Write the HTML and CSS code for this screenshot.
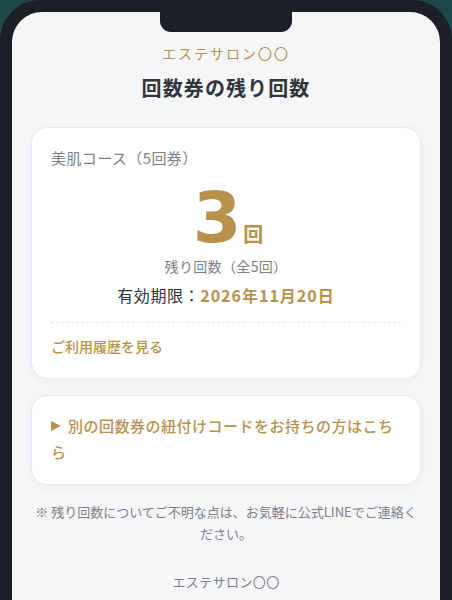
FILE: index.html
```html
<!DOCTYPE html>
<html lang="ja">
<head>
<meta charset="utf-8">
<title>回数券の残り回数</title>
<link rel="stylesheet" href="styles.css">
</head>
<body>
<div class="phone">
  <div class="screen">
    <div class="notch"></div>
    <div class="content">
      <div class="brand">エステサロン〇〇</div>
      <h1 class="title">回数券の残り回数</h1>

      <section class="card ticket">
        <div class="course">美肌コース（5回券）</div>
        <div class="count">
          <span class="count-num">3</span><span class="count-unit">回</span>
        </div>
        <div class="remain">残り回数（全5回）</div>
        <div class="expiry">有効期限：<span class="expiry-date">2026年11月20日</span></div>
        <div class="history"><a class="history-link">ご利用履歴を見る</a></div>
      </section>

      <section class="card link-card">
        <p class="link-text"><span class="tri"></span>別の回数券の紐付けコードをお持ちの方はこちら</p>
      </section>

      <p class="note">※ 残り回数についてご不明な点は、お気軽に公式LINEでご連絡ください。</p>

      <div class="footer">エステサロン〇〇</div>
    </div>
  </div>
</div>
</body>
</html>
```

FILE: styles.css
```css
* { box-sizing: border-box; }

html, body {
  margin: 0;
  padding: 0;
}

body {
  width: 452px;
  height: 600px;
  overflow: hidden;
  background: linear-gradient(90deg, #1d4a48 0%, #2a2550 30%, #1b1f26 50%, #2a2550 70%, #1d4a48 100%);
  font-family: "Noto Sans CJK JP", "Noto Sans", sans-serif;
}

.phone {
  width: 452px;
  height: 600px;
  background: #1b1f26;
  border-radius: 40px 40px 0 0;
  padding: 12px 12px 0 12px;
}

.screen {
  position: relative;
  height: 100%;
  background: #f5f6f8;
  border-radius: 30px 30px 0 0;
  overflow: hidden;
}

.notch {
  position: absolute;
  top: 0;
  left: 148px;
  width: 132px;
  height: 20px;
  background: #1b1f26;
  border-radius: 0 0 11px 11px;
}

.content {
  padding: 31px 19px 0 19px;
  display: flex;
  flex-direction: column;
}

.brand {
  text-align: center;
  color: #b8914d;
  font-size: 14px;
  line-height: 20px;
  letter-spacing: 2px;
}

.title {
  margin: 11px 0 0 0;
  text-align: center;
  color: #30353c;
  font-size: 20px;
  line-height: 28px;
  font-weight: 700;
  letter-spacing: 1.1px;
}

.card {
  background: #ffffff;
  border: 1px solid #e6e8ec;
  border-radius: 16px;
  box-shadow: 0 2px 10px rgba(20, 30, 50, 0.05);
}

.ticket {
  margin-top: 25px;
  padding: 19px 19px 21px 19px;
  display: flex;
  flex-direction: column;
}

.course {
  color: #7b8089;
  font-size: 15px;
  line-height: 22px;
  letter-spacing: 0.4px;
}

.count {
  margin-top: 22px;
  display: flex;
  justify-content: center;
  align-items: baseline;
  color: #b8914d;
}

.count-num {
  display: block;
  font-family: "DejaVu Sans", "Liberation Sans", sans-serif;
  font-size: 70px;
  line-height: 54px;
  font-weight: 700;
  padding-left: 4px;
}

.count-unit {
  display: block;
  font-size: 20px;
  font-weight: 700;
  margin-left: 2px;
  line-height: 20px;
}

.remain {
  margin-top: 11px;
  text-align: center;
  color: #7b8089;
  font-size: 14px;
  line-height: 20px;
  letter-spacing: 0.35px;
}

.expiry {
  margin-top: 7px;
  text-align: center;
  color: #2f343a;
  font-size: 16px;
  line-height: 24px;
  letter-spacing: 0.6px;
}

.expiry-date {
  color: #b8914d;
  font-weight: 700;
  letter-spacing: 1px;
}

.history {
  margin-top: 15px;
  border-top: 1px dashed #e3e5e9;
  padding-top: 10px;
}

.history-link {
  color: #b8914d;
  font-size: 14px;
  line-height: 20px;
  font-weight: 500;
}

.link-card {
  margin-top: 16px;
  padding: 17px 19px 19px 19px;
}

.link-text {
  margin: 0;
  color: #b8914d;
  font-size: 15px;
  line-height: 26px;
  font-weight: 500;
  letter-spacing: 0.5px;
}

.tri {
  display: inline-block;
  width: 0;
  height: 0;
  border-left: 10px solid #b8914d;
  border-top: 5px solid transparent;
  border-bottom: 5px solid transparent;
  margin-right: 7px;
  vertical-align: 1px;
}

.note {
  margin: 16px 0 0 0;
  text-align: center;
  color: #7b8089;
  font-size: 13px;
  line-height: 22px;
  letter-spacing: 0;
}

.footer {
  margin-top: 27px;
  text-align: center;
  color: #7b8089;
  font-size: 13px;
  line-height: 20px;
  letter-spacing: 0.4px;
}
```
